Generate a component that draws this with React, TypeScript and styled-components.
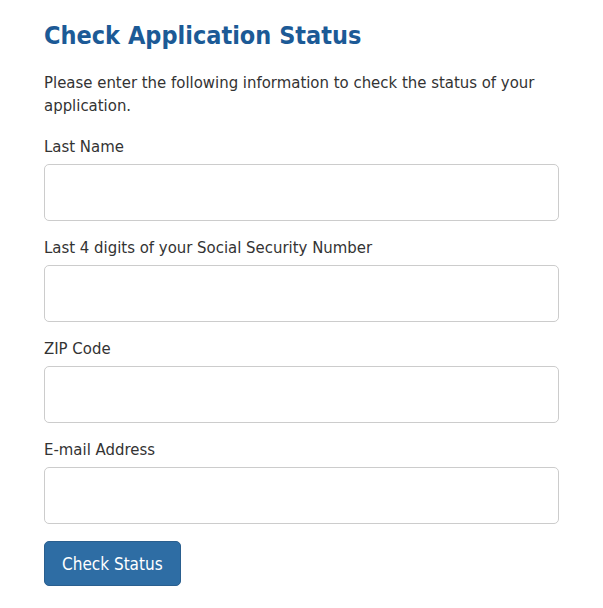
import React from "react";
import styled, { createGlobalStyle } from "styled-components";

const Global = createGlobalStyle`
  html, body { margin: 0; padding: 0; background: #fff; }
  body { font-family: "DejaVu Sans Condensed", "DejaVu Sans", Tahoma, sans-serif; color: #333; }
  * { box-sizing: border-box; }
`;

const Page = styled.div`
  padding: 18px 45px 20px 44px;
  width: 603px;
`;

const Title = styled.h1`
  margin: 0 0 17px 0;
  font-size: 25px;
  line-height: 36px;
  font-weight: bold;
  color: #1c5a96;
`;

const Intro = styled.p`
  margin: 0 0 20px 0;
  font-size: 16.6px;
  line-height: 23px;
  color: #333;
`;

const Field = styled.div`
  display: flex;
  flex-direction: column;
  margin-bottom: 17px;
`;

const Label = styled.label`
  font-size: 16.6px;
  line-height: 20px;
  margin-bottom: 7px;
  color: #333;
`;

const Input = styled.input`
  height: 57px;
  width: 515px;
  border: 1px solid #ccc;
  border-radius: 5px;
  font-size: 16px;
  padding: 6px 12px;
  font-family: inherit;
`;

const Button = styled.button`
  margin-top: 0;
  height: 45px;
  padding: 0 17px;
  background: #2e6da4;
  border: 1px solid #2a5f8f;
  border-radius: 5px;
  color: #fff;
  font-size: 17px;
  font-family: inherit;
`;

const fields = [
  "Last Name",
  "Last 4 digits of your Social Security Number",
  "ZIP Code",
  "E-mail Address",
];

export default function App() {
  return (
    <>
      <Global />
      <Page>
        <Title>Check Application Status</Title>
        <Intro>
          Please enter the following information to check the status of your application.
        </Intro>
        {fields.map((f) => (
          <Field key={f}>
            <Label>{f}</Label>
            <Input type="text" />
          </Field>
        ))}
        <Button>Check Status</Button>
      </Page>
    </>
  );
}
